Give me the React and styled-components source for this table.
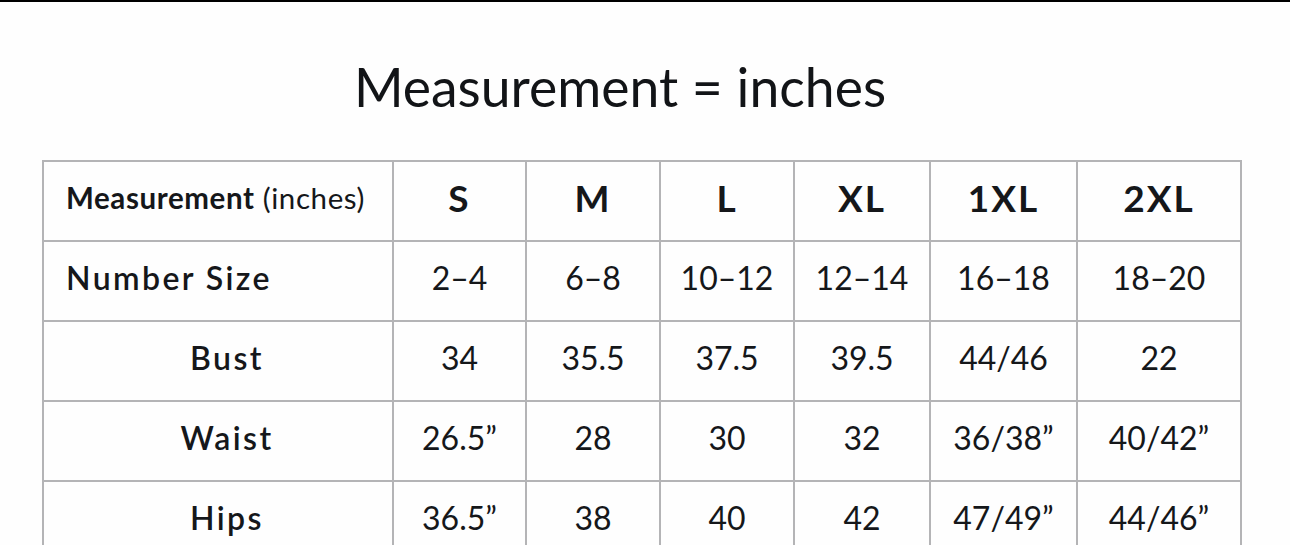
import React from "react";
import styled, { createGlobalStyle } from "styled-components";

const Global = createGlobalStyle`
  html, body { margin: 0; padding: 0; background: #fefefe; }
  body { font-family: Lato, "Open Sans", sans-serif; color: #121417; }
`;

const Page = styled.div`
  border-top: 2px solid #000;
  min-height: 543px;
  display: flex;
  flex-direction: column;
`;

const Title = styled.h1`
  margin: 52px 0 0;
  padding-right: 50px;
  text-align: center;
  font-family: Lato, sans-serif;
  font-weight: 400;
  font-size: 53.5px;
  line-height: 64px;
  color: #121417;
`;

const TableWrap = styled.div`
  margin: 42px 0 0 42px;
`;

const Table = styled.table`
  border-collapse: collapse;
  table-layout: fixed;
  width: 1200px;
`;

const Col = styled.col`
  width: ${(p) => p.$w}px;
`;

const Cell = styled.td`
  border: 2px solid #b4b4b6;
  height: 70px;
  padding: 0 0 8px;
  text-align: center;
  vertical-align: middle;
  font-size: 32px;
  font-weight: 400;
  color: #15171a;
  white-space: nowrap;
`;

const HeadCell = styled(Cell)`
  font-weight: 700;
  font-size: 37px;
  letter-spacing: 2px;
`;

const CornerCell = styled(Cell)`
  text-align: left;
  padding-left: 22px;
  font-size: 29.5px;
  letter-spacing: 0.6px;
  font-weight: 400;
`;

const Strong = styled.span`
  font-weight: 700;
`;

const LabelCell = styled(Cell)`
  font-weight: 600;
  font-size: 32px;
  letter-spacing: 2.4px;
  text-align: ${(p) => (p.$left ? "left" : "center")};
  padding-left: ${(p) => (p.$left ? "22px" : "18px")};
`;

const widths = [350, 133, 134, 134, 136, 147, 164];
const sizes = ["S", "M", "L", "XL", "1XL", "2XL"];
const rows = [
  { label: "Number Size", left: true, values: ["2–4", "6–8", "10–12", "12–14", "16–18", "18–20"] },
  { label: "Bust", values: ["34", "35.5", "37.5", "39.5", "44/46", "22"] },
  { label: "Waist", values: ["26.5”", "28", "30", "32", "36/38”", "40/42”"] },
  { label: "Hips", values: ["36.5”", "38", "40", "42", "47/49”", "44/46”"] },
];

export default function App() {
  return (
    <>
      <Global />
      <Page>
        <Title>Measurement = inches</Title>
        <TableWrap>
          <Table>
            <colgroup>
              {widths.map((w, i) => (
                <Col key={i} $w={w} />
              ))}
            </colgroup>
            <tbody>
              <tr>
                <CornerCell>
                  <Strong>Measurement</Strong> (inches)
                </CornerCell>
                {sizes.map((s) => (
                  <HeadCell key={s}>{s}</HeadCell>
                ))}
              </tr>
              {rows.map((r) => (
                <tr key={r.label}>
                  <LabelCell $left={r.left}>{r.label}</LabelCell>
                  {r.values.map((v, i) => (
                    <Cell key={i}>{v}</Cell>
                  ))}
                </tr>
              ))}
            </tbody>
          </Table>
        </TableWrap>
      </Page>
    </>
  );
}
